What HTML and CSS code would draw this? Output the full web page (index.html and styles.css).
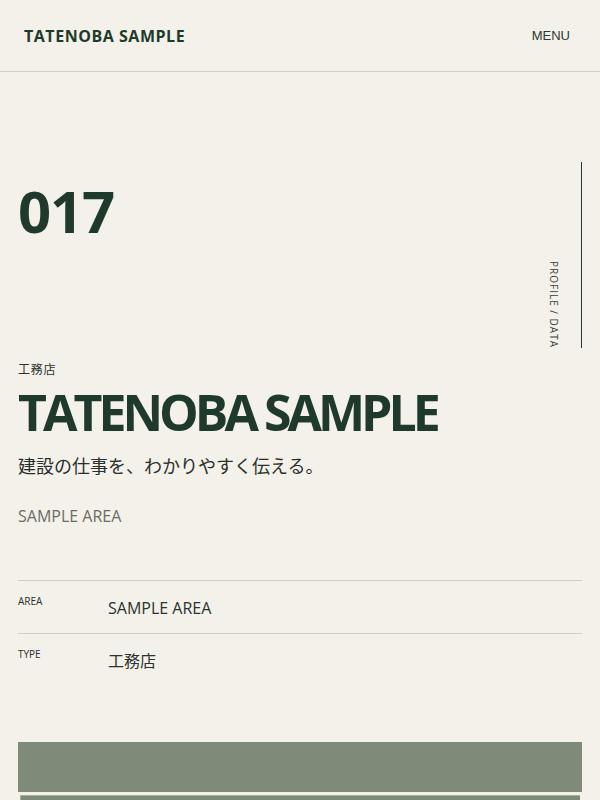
FILE: index.html
```html
<!DOCTYPE html>
<html lang="ja">
<head>
<meta charset="utf-8">
<title>TATENOBA SAMPLE</title>
<link rel="stylesheet" href="styles.css">
</head>
<body>
<header class="site-header">
  <div class="logo">TATENOBA SAMPLE</div>
  <div class="menu">MENU</div>
</header>
<main class="hero">
  <div class="hero-top">
    <div class="num">017</div>
    <div class="side">
      <span class="side-label">PROFILE / DATA</span>
    </div>
  </div>
  <div class="kind">工務店</div>
  <h1 class="title">TATENOBA SAMPLE</h1>
  <p class="tagline">建設の仕事を、わかりやすく伝える。</p>
  <p class="area">SAMPLE AREA</p>
  <dl class="data">
    <div class="row"><dt>AREA</dt><dd>SAMPLE AREA</dd></div>
    <div class="row"><dt>TYPE</dt><dd>工務店</dd></div>
  </dl>
  <div class="visual"></div>
  <div class="visual second"></div>
</main>
</body>
</html>
```

FILE: styles.css
```css
* { box-sizing: border-box; }
html, body { margin: 0; padding: 0; }
body {
  background: #f3f1ea;
  color: #1f3a2c;
  font-family: "Open Sans", "Noto Sans CJK JP", sans-serif;
  overflow: hidden;
}
.site-header {
  height: 72px;
  border-bottom: 1px solid #d3d0c8;
  display: flex;
  align-items: center;
  justify-content: space-between;
  padding: 0 30px 0 24px;
}
.logo {
  font-weight: 700;
  font-size: 16px;
  letter-spacing: 0.033em;
  color: #1f3a2c;
}
.menu {
  font-family: "Liberation Sans", Arial, sans-serif;
  font-size: 13px;
  color: #2a3a30;
}
.hero {
  padding: 90px 18px 0;
}
.hero-top {
  display: flex;
  justify-content: space-between;
  align-items: flex-start;
}
.num {
  margin-top: 20px;
  font-size: 58px;
  line-height: 1;
  font-weight: 700;
  letter-spacing: -0.02em;
  color: #1f3a2c;
}
.side {
  height: 186px;
  display: flex;
  align-items: flex-end;
  border-right: 1px solid #1f3a2c;
  padding-right: 22px;
}
.side-label {
  writing-mode: vertical-rl;
  font-size: 10px;
  line-height: 1;
  letter-spacing: 0.1em;
  color: #3a3f3a;
}
.kind {
  margin-top: 13px;
  font-size: 12px;
  line-height: 18px;
  letter-spacing: 0.06em;
  color: #2b2f2c;
}
.title {
  margin: 6px 0 0;
  font-size: 50px;
  line-height: 1.1;
  font-weight: 700;
  letter-spacing: -0.08em;
  color: #1f3a2c;
}
.tagline {
  margin: 12px 0 0;
  font-size: 18px;
  line-height: 1.6;
  color: #2a2f2c;
}
.area {
  margin: 23px 0 0;
  font-size: 16px;
  line-height: 1.6;
  color: #6c6c66;
}
.data {
  margin: 51px 0 0;
}
.row {
  display: grid;
  grid-template-columns: 90px 1fr;
  align-items: start;
  border-top: 1px solid #cfccc4;
  padding: 12px 0 12px;
}
.row dt {
  font-size: 10px;
  line-height: 16px;
  color: #2b2f2c;
}
.row dd {
  margin: 0;
  padding-top: 2px;
  font-size: 16px;
  line-height: 26px;
  color: #2a332d;
}
.visual {
  margin-top: 56px;
  height: 50px;
  background: #7f8a78;
}
.visual.second {
  margin: 3px 2px 0;
  height: 60px;
  border-top: 1px solid #a8b0a2;
  border-left: 1px solid #a8b0a2;
  background: #7f8a78;
}
```
